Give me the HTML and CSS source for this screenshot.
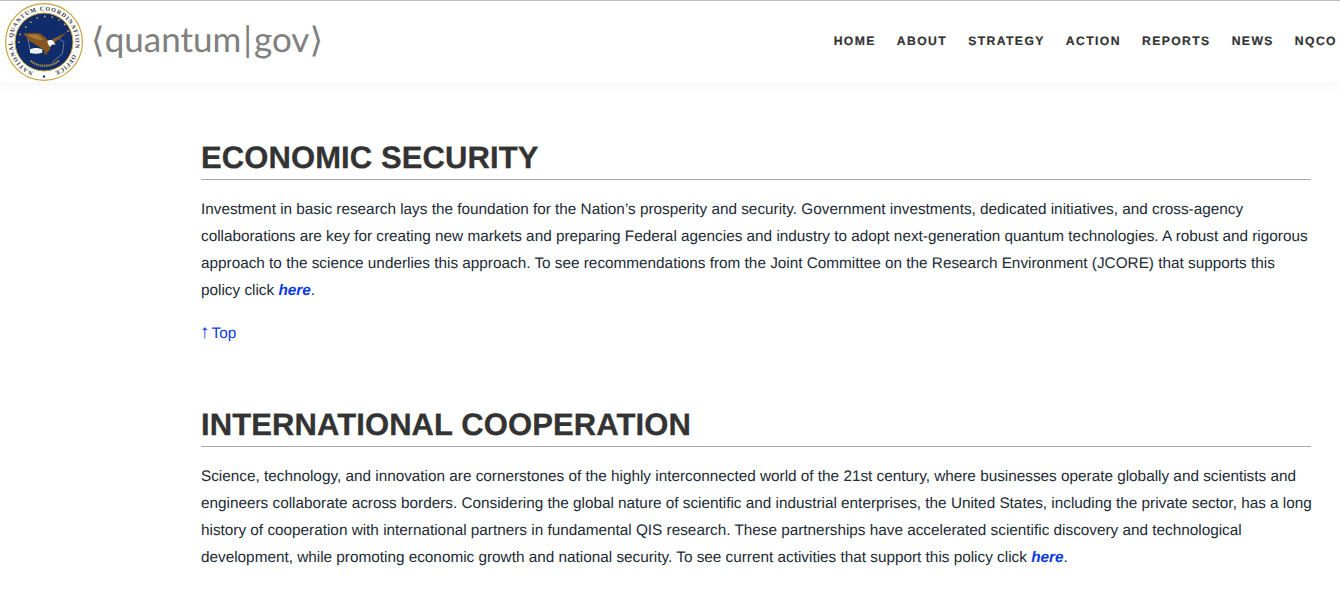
FILE: index.html
```html
<!DOCTYPE html>
<html lang="en">
<head>
<meta charset="utf-8">
<title>Economic Security - quantum.gov</title>
<link rel="stylesheet" href="styles.css">
</head>
<body>
<header class="site-header">
  <a class="brand" href="#">
    <svg class="seal" viewBox="0 0 80 80" width="80" height="80" aria-hidden="true">
      <defs>
        <path id="ring-main" d="M29.23 69.6 A31.5 31.5 0 1 1 71.02 45.47"/>
        <path id="ring-office" d="M69 52.3 A31.5 31.5 0 0 1 50.77 69.6"/>
      </defs>
      <circle cx="40" cy="40" r="38.4" fill="#fff" stroke="#c9a33e" stroke-width="1.2"/>
      <circle cx="40" cy="40" r="29" fill="#102c6b" stroke="#c8a53f" stroke-width="1"/>
      <text class="seal-text"><textPath href="#ring-main" textLength="143">NATIONAL QUANTUM COORDINATION</textPath></text>
      <text class="seal-text"><textPath href="#ring-office" textLength="25.800">OFFICE</textPath></text>
      <circle cx="40" cy="74.500" r="1.200" fill="#1c3a7a"/>
      <g fill="#c8a53f">
        <circle cx="15" cy="40.200" r=".9"/><circle cx="16" cy="32.500" r=".9"/><circle cx="21.700" cy="25.200" r=".9"/>
        <circle cx="26.700" cy="20.200" r=".9"/><circle cx="33.300" cy="15.800" r=".9"/><circle cx="40.700" cy="14.500" r=".9"/>
        <circle cx="48.300" cy="15.200" r=".9"/><circle cx="55" cy="17.800" r=".9"/><circle cx="60.700" cy="22.500" r=".9"/>
        <circle cx="64" cy="29.200" r=".9"/>
      </g>
      <path class="seal-line" d="M23.300 33.500 L26 47.800"/>
      <path class="seal-line" d="M55 36.800 L60 40.200 L58.300 51.800 L48.300 60.200"/>
      <path d="M45 39.500 C50 36 57 33 63.300 30.200 C59 34 54 38 49 41z" fill="#8a5c22"/>
      <path d="M19.300 31.200 L35 31.200 C39 33 42 36 44 38.500 C46 42 47 46 45.500 48.500 L42.500 51 L40 49 L38.300 46.800 L30 41.800 L25 38.500z" fill="#85561f"/>
      <path d="M23 32.500 L33 32.500 C36 34 38 36 39 38 C33 38 27 36 23 32.500z" fill="#a97a35"/>
      <path d="M43.300 39 C45 37.500 48.500 37.500 50 40 L51.500 42.300 L48 42.800 L46 45 C44.500 43 43.500 41 43.300 39z" fill="#fff"/>
      <path d="M50 40.500 L52 42.300 L49.500 42.500z" fill="#e3b23c"/>
      <path d="M26 47.500 C29 45.500 35 45.500 38.300 47.500 L38.300 50.800 C34 52 30 52 26 51z" fill="#eef0f2"/>
      <path d="M40 50 L43.500 50 L42.500 53 L40.500 52.500z" fill="#7a4d1e"/>
      <path d="M26.700 58.500 C31 63 37 64 40 63.500 C44 64 50 63 55 58.500" fill="none" stroke="#9b8a3c" stroke-width="2.200" stroke-dasharray="1.500 .6"/>
    </svg>
    <span class="wordmark">⟨quantum<span class="pipe">|</span>gov⟩</span>
  </a>
  <nav class="main-nav">
    <a href="#">HOME</a>
    <a href="#">ABOUT</a>
    <a href="#">STRATEGY</a>
    <a href="#">ACTION</a>
    <a href="#">REPORTS</a>
    <a href="#">NEWS</a>
    <a href="#">NQCO</a>
  </nav>
</header>
<main class="content">
  <section class="policy">
    <h2>ECONOMIC SECURITY</h2>
    <p>Investment in basic research lays the foundation for the Nation’s prosperity and security. Government investments, dedicated initiatives, and cross-agency collaborations are key for creating new markets and preparing Federal agencies and industry to adopt next-generation quantum technologies. A robust and rigorous approach to the science underlies this approach. To see recommendations from the Joint Committee on the Research Environment (JCORE) that supports this policy click <a class="here" href="#">here</a>.</p>
    <a class="top-link" href="#"><span class="arrow">↑</span> Top</a>
  </section>
  <section class="policy">
    <h2>INTERNATIONAL COOPERATION</h2>
    <p>Science, technology, and innovation are cornerstones of the highly interconnected world of the 21st century, where businesses operate globally and scientists and engineers collaborate across borders. Considering the global nature of scientific and industrial enterprises, the United States, including the private sector, has a long history of cooperation with international partners in fundamental QIS research. These partnerships have accelerated scientific discovery and technological development, while promoting economic growth and national security. To see current activities that support this policy click <a class="here" href="#">here</a>.</p>
    <a class="top-link" href="#"><span class="arrow">↑</span> Top</a>
  </section>
</main>
</body>
</html>
```
FILE: styles.css
```css
* { box-sizing: border-box; }
html, body { margin: 0; height: 594px; overflow: hidden; }
body {
  background: #fff;
  color: #212a35;
  font-family: "Liberation Sans", Arial, sans-serif;
  font-size: 15.320px;
  line-height: 27px;
  text-rendering: geometricPrecision;
}
a { color: #0a3ae6; text-decoration: none; }

.site-header {
  height: 82px;
  border-top: 1px solid #bdbdbd;
  display: flex;
  justify-content: space-between;
  align-items: flex-start;
  background: #fff;
  box-shadow: 0 2px 14px rgba(0, 0, 0, .05);
}
.brand { display: flex; align-items: center; color: #808080; height: 81px; padding-left: 4px; }
.seal { display: block; flex: none; }
.seal-text { font-family: "Liberation Serif", serif; font-size: 6px; font-weight: 700; fill: #333; }
.seal-line { fill: none; stroke: #8d9bb5; stroke-width: .7; }
.wordmark {
  font-family: "Lato", sans-serif;
  font-size: 35px;
  line-height: 44px;
  margin-left: 7px;
  margin-top: -5px;
  color: #808080;
}
.pipe { margin: 0 2px; }
.main-nav {
  display: flex;
  gap: 21px;
  padding: 30px 3px 0 0;
}
.main-nav a {
  color: #333;
  font-size: 12.200px;
  font-weight: 700;
  letter-spacing: 1.400px;
  line-height: 20px;
  -webkit-text-stroke: .2px #333;
}

.content { padding: 53px 29px 0 201px; }
.policy { margin-bottom: 55px; }
.policy h2 {
  margin: 0 0 16px;
  padding-top: 2px;
  color: #333;
  font-size: 31px;
  line-height: 42px;
  font-weight: 700;
  letter-spacing: .1px;
  border-bottom: 1px solid #aaa;
  -webkit-text-stroke: .3px #333;
}
.policy p { margin: 0 -4px 16px 0; }
.here { font-weight: 700; font-style: italic; }
.top-link { display: block; }
.arrow { font-family: "Liberation Serif", serif; font-size: 19px; line-height: 19px; margin: 0 -2px 0 -1px; }
```
